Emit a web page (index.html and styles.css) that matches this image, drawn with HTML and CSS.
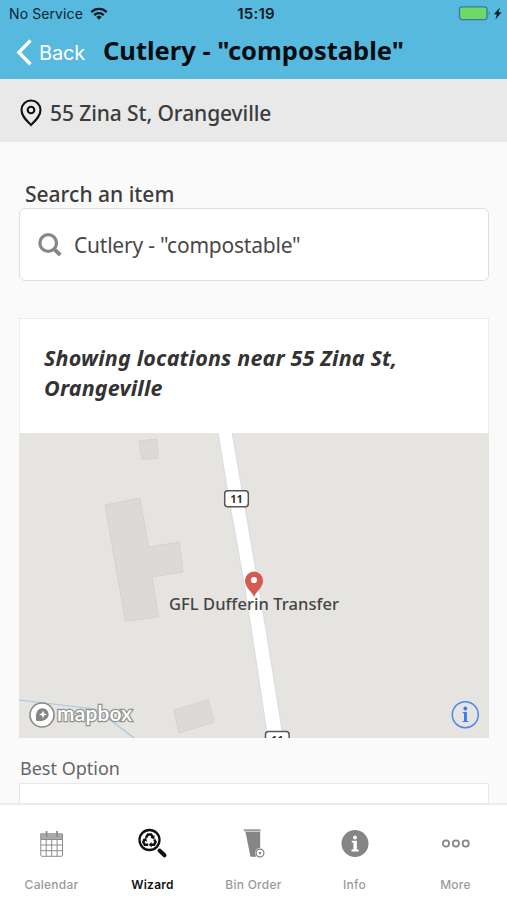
FILE: index.html
```html
<!DOCTYPE html>
<html lang="en">
<head>
<meta charset="utf-8">
<title>Wizard</title>
<link rel="stylesheet" href="styles.css">
</head>
<body>
<header class="header">
  <div class="status">
    <div class="carrier">
      <span>No Service</span>
      <svg class="wifi" width="18" height="13" viewBox="0 0 18 13" fill="none" stroke="#0b1a22" stroke-width="2.2"><path d="M1.3 5.1a11 11 0 0 1 15.4 0M4.2 8.1a6.800 6.800 0 0 1 9.600 0"/><path d="M6.300 10 9 12.800 11.700 10a4 4 0 0 0-5.400 0z" fill="#0b1a22" stroke="none"/></svg>
    </div>
    <span class="clock">15:19</span>
    <svg class="battery" width="45" height="15" viewBox="0 0 45 15"><rect x="1.500" y=".8" width="27.500" height="12.800" rx="2.500" fill="#6fd967" stroke="#337d9e" stroke-width="1.300"/><path d="M30.800 5q2.200 2.100 0 4.300z" fill="#337d9e"/><path d="m42 1.500-6.200 6.800h3l-1.400 5.200 6.100-7.200h-3.100z" fill="#0b1a22"/></svg>
  </div>
  <div class="nav">
    <div class="back">
      <svg width="16" height="27" viewBox="0 0 16 27" fill="none" stroke="#fff" stroke-width="3.400"><path d="M14.500 1.500 2.900 13.400 14.500 25.300"/></svg>
      <span>Back</span>
    </div>
    <h1 class="title">Cutlery - "compostable"</h1>
  </div>
</header>
<div class="address">
  <svg width="22" height="28" viewBox="0 0 22 28" fill="none" stroke="#111"><path d="M11 26C6.500 21.500 1.500 17 1.500 11a9.500 9.500 0 0 1 19 0C20.500 17 15.500 21.500 11 26z" stroke-width="2.100"/><circle cx="11" cy="11" r="3.300" stroke-width="2.100"/></svg>
  <span>55 Zina St, Orangeville</span>
</div>
<main class="content">
  <div class="label">Search an item</div>
  <div class="search">
    <svg width="24" height="24" viewBox="0 0 24 24" fill="none" stroke="#888"><circle cx="10.200" cy="10" r="8.300" stroke-width="3.300"/><path d="m16 16 6.300 6" stroke-width="3.800"/></svg>
    <span>Cutlery - "compostable"</span>
  </div>
  <section class="card">
    <h2 class="near">Showing locations near 55 Zina St, Orangeville</h2>
    <svg class="map" width="470" height="305" viewBox="19 433 470 305">
      <rect x="19" y="433" width="470" height="306" fill="#e5e4e0"/>
      <g fill="#dbdad6" stroke="#d0cfcb" stroke-width=".8">
        <path d="m139 441 17.500-2 2 19-16.500 1.500z"/>
        <path d="m105 505 35-7 8.500 49 30.500-5 4 30-31 5 6.500 40-33 4.500z"/>
        <path d="m174 710 34.500-10 5.500 22-35 11z"/>
      </g>
      <path d="M19 700 95 709 113 722 134 738" fill="none" stroke="#a3c8e2" stroke-width="1.200"/>
      <path d="M218 432 227.500 490 243.500 580 251.500 630 268 740H283.500L266 630 257.500 580 242 490 232 432z" fill="#fff" stroke="#d3d7e2" stroke-width=".8"/>
      <g fill="#fff" stroke="#55555a" stroke-width="1.500">
        <rect x="224.700" y="490.700" width="23.600" height="16" rx="3"/>
        <rect x="265.500" y="731.500" width="23.600" height="16" rx="3"/>
      </g>
      <g class="shield"><text x="236.500" y="503">11</text><text x="277.300" y="744">11</text></g>
      <text class="place" x="169" y="610" textLength="170">GFL Dufferin Transfer</text>
      <path d="M254 597c-1.500-5-9-9-9-16.500a9 9 0 0 1 18 0C263 588 255.500 592 254 597z" fill="#d55b50"/>
      <circle cx="254" cy="580" r="3.100" fill="#fff"/>
      <text class="brand" x="57" y="720.500" textLength="75">mapbox</text>
      <circle cx="42" cy="715" r="12" fill="#fff" stroke="#898989" stroke-width="1.600"/>
      <path d="M36.200 720.800c-1-6.500.5-12.500 6.500-12.500a6 6 0 0 1 6 6.200c-.5 5.500-6.500 7.300-12.500 6.300z" fill="#858585"/>
      <path d="m43 710.500 1.100 2.800 2.800 1.100-2.800 1.100-1.100 2.800-1.100-2.800-2.800-1.100 2.800-1.100z" fill="#fff"/>
      <circle cx="465.300" cy="714.700" r="13" fill="none" stroke="#4c86e8" stroke-width="1.500"/>
      <g fill="#3b7bed"><circle cx="465.300" cy="708.500" r="1.900"/><path d="M462.700 712h4.200v8.900h1.400v1.200h-5.800v-1.200h1.500v-7.700h-1.300z"/></g>
    </svg>
  </section>
  <div class="best">Best Option</div>
  <div class="option"></div>
</main>
<nav class="tabs">
  <div class="tab">
    <svg width="30" height="32" viewBox="0 0 30 32" fill="none" stroke="#8c8c8c"><path d="M3.500 5h22v6h-22z" fill="#aaa" stroke="none"/><path d="M3.800 6v21.300q0 1 1 1h19.700q1 0 1-1V6M3.800 11.500h21.700M3.800 17h21.700M3.800 22.700h21.700M9.200 11.500v16.800M14.700 11.500v16.800M20.100 11.500v16.800"/><path d="M9.500 3v6M20 3v6" stroke-width="1.800"/></svg>
    <span>Calendar</span>
  </div>
  <div class="tab active">
    <svg width="30" height="32" viewBox="0 0 30 32" fill="none" stroke="#111"><circle cx="11.500" cy="12" r="10" stroke-width="2.300"/><path d="m21.500 22.500 5 4.800" stroke-width="4" stroke-linecap="round"/><g transform="translate(-.7)"><path d="m8.600 9.800 2-3.300h3.200l1.800 2.900M17 11.500l1.300 2.500-1.500 2.800h-3.300M11 16.800H7.500L6 14l1.400-2.600" stroke-width="2.500"/><path d="m17.300 7-.2 4.500-3.900-1.800zM14.300 14v5.400l-2.800-2.700zM5.200 11.500l3.600-1.700 1 4z" fill="#111" stroke="none"/></g></svg>
    <span>Wizard</span>
  </div>
  <div class="tab">
    <svg width="30" height="32" viewBox="0 0 30 32"><path d="M4.500 1.200h17v2.400h-16z" fill="#999"/><path d="M6.500 4h14.700v18.500l-4 6.300h-5.700z" fill="#858585"/><circle cx="21" cy="25" r="4.900" fill="#fff"/><circle cx="21" cy="25" r="3.900" fill="#fff" stroke="#858585" stroke-width="1.300"/><circle cx="21" cy="25" r="1.200" fill="#858585"/></svg>
    <span>Bin Order</span>
  </div>
  <div class="tab">
    <svg width="30" height="32" viewBox="0 0 30 32"><circle cx="15" cy="15.500" r="13.500" fill="#858585"/><circle cx="15" cy="9.400" r="2" fill="#fff"/><path d="M11.700 12.700h5.200v8.800h1.800v1.900h-7.200v-1.900h1.900v-6.900h-1.700z" fill="#fff"/></svg>
    <span>Info</span>
  </div>
  <div class="tab">
    <svg width="30" height="32" viewBox="0 0 30 32" fill="none" stroke="#858585" stroke-width="1.800"><circle cx="5" cy="15.500" r="3.100"/><circle cx="14.900" cy="15.500" r="3.100"/><circle cx="24.700" cy="15.500" r="3.100"/></svg>
    <span>More</span>
  </div>
</nav>
</body>
</html>
```

FILE: styles.css
```css
* { box-sizing: border-box; }
body {
  margin: 0;
  height: 900px;
  overflow: hidden;
  display: flex;
  flex-direction: column;
  background: #fafafa;
  color: #3c3c3c;
  font-family: "Noto Sans", sans-serif;
}
svg { display: block; flex: none; }
.header {
  height: 79px;
  flex: none;
  background: #58b9df;
}
.status {
  height: 27px;
  padding: 0 4px 0 9px;
  display: grid;
  grid-template-columns: 1fr auto 1fr;
  align-items: center;
  font-family: Inter, sans-serif;
  font-size: 14px;
  color: #0b2431;
}
.carrier { display: flex; align-items: center; gap: 7px; letter-spacing: .1px; }
.clock { font-size: 15px; font-weight: 600; letter-spacing: .25px; color: #0b1a22; }
.battery { justify-self: end; }
.nav { display: flex; height: 52px; padding-left: 16px; }
.back {
  display: flex;
  align-items: center;
  gap: 7px;
  width: 87px;
  height: 51px;
  color: #fff;
  font-family: Inter, sans-serif;
  font-size: 20px;
  letter-spacing: -.2px;
}
.title {
  margin: 0;
  font-size: 25.5px;
  line-height: 46px;
  font-weight: 700;
  color: #050d11;
  white-space: nowrap;
}
.address {
  height: 63px;
  flex: none;
  display: flex;
  align-items: center;
  gap: 8px;
  padding: 5px 20px 0;
  background: #e9e9e9;
  font-size: 21px;
  font-weight: 500;
  letter-spacing: -.1px;
}
.content { flex: 1; min-height: 0; overflow: hidden; padding: 38px 18px 0 19px; }
.label {
  padding-left: 6px;
  font-size: 21px;
  line-height: 28px;
  font-weight: 500;
}
.search {
  display: flex;
  align-items: center;
  gap: 12px;
  height: 73px;
  padding-left: 18px;
  border: 1px solid #dedede;
  border-radius: 6px;
  background: #fff;
  font-size: 21px;
  letter-spacing: -.22px;
  color: #484848;
}
.card { margin-top: 37px; width: 470px; border: solid #ececec; border-width: 1px 0 0; background: #fff; }
.near {
  margin: 0;
  height: 114px;
  padding: 24px 50px 0 24px;
  border: solid #ececec;
  border-width: 0 1px;
  font-size: 21.5px;
  letter-spacing: .18px;
  line-height: 30px;
  font-style: italic;
  font-weight: 700;
  color: #333;
}
.shield { font: 700 11px "Noto Sans", sans-serif; fill: #333; text-anchor: middle; }
.place { font: 500 16.5px "Noto Sans", sans-serif; fill: #444; }
.brand {
  font: 600 21px Lato, sans-serif;
  fill: #fff;
  stroke: #929292;
  stroke-width: 2.6px;
  paint-order: stroke;
}
.best { height: 45px; padding: 17px 0 0 1px; font-size: 18px; line-height: 27px; color: #666; }
.option { height: 60px; width: 470px; border: 1px solid #e8e8e8; background: #fff; }
.tabs {
  height: 97px;
  flex: none;
  display: grid;
  grid-template-columns: repeat(5, 101px);
  padding-left: 1px;
  border-top: 2px solid #ececec;
  background: #fff;
}
.tab {
  display: flex;
  flex-direction: column;
  align-items: center;
  padding-top: 23px;
  font: 500 12px/18px Inter, sans-serif;
  letter-spacing: .25px;
  color: #9a9a9a;
}
.tab span { margin-top: 16px; }
.active { color: #111; font-weight: 600; }
```
